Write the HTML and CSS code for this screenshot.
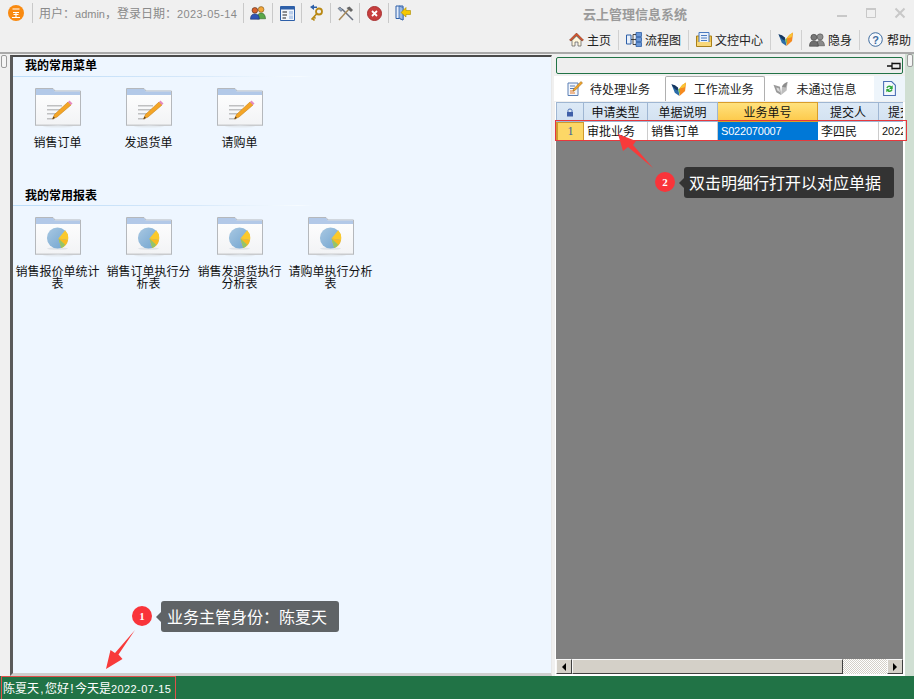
FILE: index.html
```html
<!DOCTYPE html>
<html lang="zh-CN">
<head>
<meta charset="utf-8">
<title>云上管理信息系统</title>
<link rel="stylesheet" href="styles.css">
</head>
<body>
<svg class="sprites" aria-hidden="true">
  <defs>
    <linearGradient id="pieBlue" x1="0" y1="0" x2="1" y2="1"><stop offset="0" stop-color="#a9c8e2"/><stop offset="1" stop-color="#6fa3cf"/></linearGradient>
    <linearGradient id="folderBody" x1="0" y1="0" x2="0" y2="1"><stop offset="0" stop-color="#ffffff"/><stop offset="1" stop-color="#f2f3f5"/></linearGradient>
    <symbol id="folder" viewBox="0 0 46 40">
      <path d="M.5 .5H18L20 3H45.5V37.5H.5Z" fill="url(#folderBody)" stroke="#b5b8bc"/>
      <path d="M1 1H18L20 3.5H45V7H1Z" fill="#b3c9e8"/>
      <path d="M1 36.500H45V38H1Z" fill="#c9cbce"/>
      <ellipse cx="23" cy="38.600" rx="15" ry="1" fill="#e4eaf0"/>
    </symbol>
    <symbol id="pencil" viewBox="0 0 26 24">
      <path d="M0 5H15V6.500H0ZM0 9H13V10.500H0ZM0 13H10V14.500H0ZM0 18H7V19.500H0Z" fill="#bfc0c1"/>
      <path d="M21 2L24 5L10 17L5.500 19L7.500 14.500Z" fill="#f4a526" stroke="#c77f10" stroke-width=".6"/>
      <path d="M21 2L22.500 .5L25.500 3.500L24 5Z" fill="#e58ac0"/>
      <path d="M5.500 19L6.500 16.500L8 18Z" fill="#4a3a2a"/>
    </symbol>
    <symbol id="pie" viewBox="0 0 24 24">
      <ellipse cx="12" cy="22.500" rx="11" ry="1.300" fill="#dfe3e8"/>
      <circle cx="12" cy="11.500" r="11" fill="url(#pieBlue)"/>
      <path d="M13 12L20 3.500A11 11 0 0 1 23 13.500Z" fill="#fbc92c"/>
      <path d="M13 12L23 13.500A11 11 0 0 1 16 22Z" fill="#f8bb22"/>
      <path d="M13 12L20 18.500A11 11 0 0 1 16 22Z" fill="#93c56a"/>
    </symbol>
    <symbol id="butterfly" viewBox="0 0 16 16">
      <path d="M0 2.500L7 6L8.500 15L3.500 11.500Z" fill="#2b6ca8"/>
      <path d="M0 2.500Q4 3 7 6L6.500 9Q2 7.500 0 2.500Z" fill="#16365f"/>
      <path d="M8.500 15L8.500 7Q11 2.500 15.500 .5L14.500 9.500Z" fill="#f58a1f"/>
      <path d="M8.500 7Q11 2.500 15.500 .5L14 5.500Z" fill="#f9c534"/>
      <path d="M7 8L9 7L9 13.500Z" fill="#7dbb47"/>
    </symbol>
    <symbol id="grayfly" viewBox="0 0 16 16">
      <path d="M0 4L7 6L8 15L3 12Z" fill="#9a9a9a"/>
      <path d="M8 15L9 6Q11 2 15 1L14 10Z" fill="#bdbdbd"/>
      <path d="M9 6Q11 2 15 1L13 7Z" fill="#8c8c8c"/>
      <path d="M3 7L6 8L7 12L4 10Z" fill="#d9d9d9"/>
    </symbol>
    <symbol id="people" viewBox="0 0 18 15">
      <circle cx="12.500" cy="3.500" r="3.200" fill="#f2a63b" stroke="#6b4a13" stroke-width=".6"/>
      <path d="M8 14Q8 7.500 12.500 7.500T17.500 14Z" fill="#5aa84a" stroke="#2a5a22" stroke-width=".6"/>
      <circle cx="5.500" cy="4.500" r="3.200" fill="#d9622b" stroke="#3a2010" stroke-width=".6"/>
      <path d="M.5 14.500Q.5 8.500 5.500 8.500T10.500 14.500Z" fill="#2f55b5" stroke="#162a60" stroke-width=".6"/>
    </symbol>
    <symbol id="grayppl" viewBox="0 0 18 15">
      <circle cx="12.500" cy="4" r="3.400" fill="#8f8f8f" stroke="#444" stroke-width=".6"/>
      <path d="M8 14Q8 8 12.500 8T17.500 14Z" fill="#8a8a8a" stroke="#444" stroke-width=".6"/>
      <circle cx="5.500" cy="4.500" r="3.400" fill="#777" stroke="#333" stroke-width=".6"/>
      <path d="M.5 14.500Q.5 8.500 5.500 8.500T10.500 14.500Z" fill="#6e6e6e" stroke="#333" stroke-width=".6"/>
    </symbol>
  </defs>
</svg>

<header class="top">
  <div class="top-row">
    <div class="logo">
      <svg viewBox="0 0 16 16" width="16" height="16"><circle cx="8" cy="8" r="8" fill="#f98a10"/><path d="M4.500 4H11.500M5 7.500H11M8 7.500V12M5.500 9.500H10.500M4 12.500H12" stroke="#fff" stroke-width="1.100" fill="none"/></svg>
    </div>
    <span class="sep"></span>
    <span class="user">用户&#xFF1A;<span class="lat">admin</span>&#xFF0C;登录日期&#xFF1A;<span class="num">2023-05-14</span></span>
    <span class="sep"></span>
    <span class="tool"><svg width="16" height="14"><use href="#people"/></svg></span><span class="sep"></span>
    <span class="tool"><svg viewBox="0 0 15 15" width="15" height="15"><path d="M.5 .5H14.500V14.500H.5Z" fill="#f2f6fc" stroke="#2d5fa8"/><path d="M1 1H14V3.500H1Z" fill="#2d5fa8"/><path d="M2.500 6H7M2.500 9H7M2.500 12H6" stroke="#222"/><path d="M9 5H13V8.500H9ZM9 9.500H13V13H9Z" fill="#b9cdea"/></svg></span><span class="sep"></span>
    <span class="tool"><svg viewBox="0 0 14 18" width="14" height="18"><path d="M1 3L5 .5V2.500H8V4H5V6Z" fill="#2d5fa8"/><circle cx="10" cy="7.500" r="3" fill="none" stroke="#b98914" stroke-width="1.800"/><path d="M8 9.500L2.500 15.500M3.500 14.500L5.500 16.500M5 13L6.500 14.500" stroke="#b98914" stroke-width="1.700" fill="none"/></svg></span><span class="sep"></span>
    <span class="tool"><svg viewBox="0 0 17 15" width="17" height="15"><path d="M5 3L16 14" stroke="#6b7280" stroke-width="1.500"/><path d="M12 3L2 14" stroke="#a88a5a" stroke-width="1.500"/><path d="M9.500 2L12.500 .5L16 4L14 6Z" fill="#666"/><path d="M1 2.500L3 1L5.500 3.500L4 5.500Z" fill="#8fa3b8" stroke="#445" stroke-width=".5"/></svg></span><span class="sep"></span>
    <span class="tool"><svg viewBox="0 0 15 15" width="15" height="15"><circle cx="7.500" cy="7.500" r="7" fill="#c73e3e" stroke="#a83232"/><path d="M5 5L10 10M10 5L5 10" stroke="#fff" stroke-width="1.800"/></svg></span><span class="sep"></span>
    <span class="tool"><svg viewBox="0 0 16 16" width="16" height="16"><path d="M1 1H8V15L4.500 13.500H1Z" fill="#e6eefb" stroke="#2d5fa8"/><path d="M4 1L8 2.500V15L4 13Z" fill="#9bb9e4" stroke="#2d5fa8" stroke-width=".7"/><path d="M15.500 5.500H11V2.500L6 7.500L11 12V9.500H15.500Z" fill="#f6c800" stroke="#a88a00" stroke-width=".6"/></svg></span>
    <span class="title">云上管理信息系统</span>
    <span class="wctl">
      <svg width="12" height="12"><path d="M1 9H11" stroke="#c8c8c8" stroke-width="2"/></svg>
      <svg width="12" height="12"><path d="M1.500 2H10.500V10.500H1.500Z" fill="none" stroke="#c8c8c8"/><path d="M1 2H11" stroke="#c8c8c8" stroke-width="2"/></svg>
      <svg width="12" height="12"><path d="M1.500 1.500L10.500 10.500M10.500 1.500L1.500 10.500" stroke="#c8c8c8" stroke-width="2"/></svg>
    </span>
  </div>
  <nav class="nav-row">
    <span class="nav"><svg viewBox="0 0 15 15" width="15" height="15"><path d="M7.500 1L.5 8L2 9L7.500 3.500L13 9L14.500 8Z" fill="#d8512a" stroke="#6b2a10" stroke-width=".5"/><path d="M3 8.500L7.500 4L12 8.500V14H9V10H6V14H3Z" fill="#fff6dc" stroke="#555" stroke-width=".7"/></svg>主页</span><span class="nsep"></span>
    <span class="nav"><svg viewBox="0 0 16 15" width="16" height="15"><path d="M.5 3H5V12H.5Z" fill="#e8f0fa" stroke="#2d5fa8"/><path d="M10 .5H15.500V4.500H10ZM10 5.500H15.500V9.500H10ZM10 10.500H15.500V14.500H10Z" fill="#6a97d6" stroke="#2d5fa8" stroke-width=".8"/><path d="M5 7.500H10M7 2.500H10M7 2.500V12.500H10" stroke="#222" fill="none" stroke-width=".8"/></svg>流程图</span><span class="nsep"></span>
    <span class="nav"><svg viewBox="0 0 16 15" width="16" height="15"><path d="M.5 4H15.500V14.500H.5Z" fill="#f0c24a" stroke="#a8801a"/><path d="M3 .5H13V12H3Z" fill="#e9f1fb" stroke="#4a7ac0"/><path d="M5 3.500H11M5 6H11M5 8.500H11" stroke="#4a7ac0"/><path d="M1 10H15V14H1Z" fill="#f8d778"/></svg>文控中心</span><span class="nsep"></span>
    <span class="nav"><svg width="16" height="15"><use href="#butterfly"/></svg></span><span class="nsep"></span>
    <span class="nav"><svg width="16" height="14"><use href="#grayppl"/></svg>隐身</span><span class="nsep"></span>
    <span class="nav last"><svg viewBox="0 0 15 15" width="15" height="15"><circle cx="7.500" cy="7.500" r="6.800" fill="#f5f8fc" stroke="#3f6c9f"/><text class="qmark" x="7.500" y="11.500" text-anchor="middle">?</text></svg>帮助</span>
  </nav>
</header>

<div class="main">
  <div class="gutter"><span class="handle"></span></div>
  <section class="panel">
    <h2 class="sec-title">我的常用菜单</h2>
    <div class="sec-line"></div>
    <div class="items first">
      <div class="item"><span class="ico"><svg class="fld" width="46" height="40"><use href="#folder"/></svg><svg class="pen" width="26" height="24"><use href="#pencil"/></svg></span><span class="lbl">销售订单</span></div>
      <div class="item"><span class="ico"><svg class="fld" width="46" height="40"><use href="#folder"/></svg><svg class="pen" width="26" height="24"><use href="#pencil"/></svg></span><span class="lbl">发退货单</span></div>
      <div class="item"><span class="ico"><svg class="fld" width="46" height="40"><use href="#folder"/></svg><svg class="pen" width="26" height="24"><use href="#pencil"/></svg></span><span class="lbl">请购单</span></div>
    </div>
    <h2 class="sec-title second">我的常用报表</h2>
    <div class="sec-line"></div>
    <div class="items">
      <div class="item"><span class="ico"><svg class="fld" width="46" height="40"><use href="#folder"/></svg><svg class="chart" width="23" height="23"><use href="#pie"/></svg></span><span class="lbl">销售报价单统计表</span></div>
      <div class="item"><span class="ico"><svg class="fld" width="46" height="40"><use href="#folder"/></svg><svg class="chart" width="23" height="23"><use href="#pie"/></svg></span><span class="lbl">销售订单执行分析表</span></div>
      <div class="item"><span class="ico"><svg class="fld" width="46" height="40"><use href="#folder"/></svg><svg class="chart" width="23" height="23"><use href="#pie"/></svg></span><span class="lbl">销售发退货执行分析表</span></div>
      <div class="item"><span class="ico"><svg class="fld" width="46" height="40"><use href="#folder"/></svg><svg class="chart" width="23" height="23"><use href="#pie"/></svg></span><span class="lbl">请购单执行分析表</span></div>
    </div>
  </section>

  <section class="right">
    <div class="dock"><svg width="14" height="8" viewBox="0 0 14 8"><path d="M0 4H5M5 .5V7.500M5 1.500H13V6.500H5" fill="none" stroke="#111" stroke-width="1.300"/></svg></div>
    <div class="tabs">
      <span class="tab"><svg viewBox="0 0 16 15" width="16" height="15"><path d="M1 2H11V14.500H1Z" fill="#f3f6fb" stroke="#5a7fb5"/><path d="M3 5H8M3 7.500H8" stroke="#5a7fb5"/><path d="M3 10H7M3 12H8" stroke="#e57a2a"/><path d="M14 .5L15.500 2L8 9.500L6 10L6.500 8Z" fill="#f4a526" stroke="#8a5a10" stroke-width=".5"/></svg>待处理业务</span>
      <span class="tab active"><svg width="16" height="15"><use href="#butterfly"/></svg>工作流业务</span>
      <span class="tab third"><svg width="16" height="15"><use href="#grayfly"/></svg>未通过信息</span>
      <span class="refresh"><svg viewBox="0 0 12 14" width="13" height="15"><path d="M.5 .5H8L11.500 4V13.500H.5Z" fill="#f4f8fe" stroke="#4a6fb5"/><path d="M3 6Q5 3 8 5L9 4V7.500H5.500L7 6Q5 5 4 7Z" fill="#2fa83a"/><path d="M9 8.500Q7 11.500 4 9.500L3 10.500V7.500H6.500L5 8.500Q7 9.500 8 7.500Z" fill="#2fa83a"/></svg></span>
    </div>
    <div class="grid">
      <div class="cols head">
        <span class="hc lock"><svg viewBox="0 0 8 9" width="8" height="9"><path d="M2 4V2.500Q2 1 4 1T6 2.500V4" fill="none" stroke="#4a6fb5"/><path d="M1 4H7V8.500H1Z" fill="#3f5fa8"/></svg></span>
        <span class="hc">申请类型</span>
        <span class="hc">单据说明</span>
        <span class="hc sel">业务单号</span>
        <span class="hc">提交人</span>
        <span class="hc clip">提交时间</span>
      </div>
      <div class="cols row">
        <span class="rh">1</span>
        <span class="c">审批业务</span>
        <span class="c">销售订单</span>
        <span class="c cur">S022070007</span>
        <span class="c">李四民</span>
        <span class="c date">2022-07-15</span>
      </div>
      <div class="empty"></div>
      <div class="hscroll">
        <span class="sbtn"><i class="arr l"></i></span>
        <span class="thumb"></span>
        <span class="track"></span>
        <span class="sbtn"><i class="arr r"></i></span>
      </div>
    </div>
  </section>
  <div class="strip"><span class="handle"></span></div>
</div>

<footer class="status"><span class="status-msg">陈夏天<span class="half">,</span>您好<span class="half">!</span>今天是<span class="num">2022-07-15</span></span></footer>

<div class="rowmark"></div>
<svg class="arrow a1" width="40" height="44" viewBox="0 0 40 44"><path d="M34 1L17.500 25.500L21.500 30L5 40L9.500 21L14 24Z" fill="#f83a3a"/></svg>
<svg class="arrow a2" width="42" height="42" viewBox="0 0 42 42"><path d="M3 4L21 11L18 15L38 38L13 17L8 21Z" fill="#f83a3a"/></svg>
<span class="badge b1">1</span>
<span class="tip t1">业务主管身份&#xFF1A;陈夏天</span>
<span class="badge b2">2</span>
<span class="tip t2">双击明细行打开以对应单据</span>
</body>
</html>
```

FILE: styles.css
```css
* { box-sizing: border-box; }
html, body { margin: 0; height: 100%; }
body {
  width: 914px; height: 699px; overflow: hidden; position: relative;
  display: flex; flex-direction: column;
  background: #f0f0f0; color: #111;
  font: 12px/1 "Noto Sans CJK SC", "Liberation Sans", sans-serif;
}
.sprites { position: absolute; width: 0; height: 0; }
.lat { font-family: "Liberation Sans", sans-serif; font-size: 11px; }
.num { font-family: "Liberation Sans", sans-serif; font-size: 11px; letter-spacing: .4px; }
.half { display: inline-block; width: 6px; font-family: "Liberation Sans", sans-serif; text-align: center; }

.top { height: 54px; flex: none; border-bottom: 2px solid #a9a9a9; background: #f0f0f0; display: flex; flex-direction: column; }
.top-row { height: 27px; display: flex; align-items: center; padding: 0 0 1px 8px; }
.logo { width: 16px; height: 16px; margin-right: 8px; display: flex; }
.sep { width: 1px; height: 20px; background: #c9c9c9; flex: none; }
.user { width: 210px; padding-left: 6px; color: #8a8a8a; white-space: nowrap; }
.tool { width: 28px; display: flex; justify-content: center; flex: none; }
.title { margin-left: 166px; width: 104px; color: #9a9a9a; font-size: 13px; font-weight: 700; white-space: nowrap; }
.wctl { margin-left: 149px; display: flex; gap: 17px; }

.nav-row { height: 25px; display: flex; justify-content: flex-end; align-items: center; padding-right: 3px; }
.nav { display: flex; align-items: center; gap: 3px; color: #222; white-space: nowrap; padding: 0 7px; }
.nav.last { padding: 0 0 0 8px; gap: 4px; }
.nsep { width: 1px; height: 20px; background: #d0d0d0; }
.qmark { font: 700 11px "Liberation Sans", sans-serif; fill: #3f6c9f; }

.main { flex: 1; min-height: 0; display: flex; }
.gutter { width: 10px; flex: none; padding: 1px 0 0 1px; }
.handle { display: block; width: 6px; height: 13px; border: 1px solid #9a9a9a; border-radius: 2px; background: #f4f4f4; }

.panel { width: 542px; flex: none; margin-top: 1px; background: #eef6ff; border-left: 3px solid #5a5a5a; border-top: 2px solid #4a4a4a; border-bottom: 3px solid #cfcfcf; border-right: 1px solid #e8e8e8; }
.sec-title { margin: 0; padding-left: 12px; height: 19px; font-size: 12px; font-weight: 700; color: #000; line-height: 16px; }
.sec-title.second { height: 17px; line-height: 13px; }
.sec-line { height: 1px; width: 300px; background: linear-gradient(to right, #bcdcf8, #d6e8fa 60%, #f6fbff 95%, #eef6ff); }
.items { display: flex; padding: 11px 0 0; margin-left: -1px; }
.items.first { height: 111px; }
.item { width: 91px; flex: none; display: flex; flex-direction: column; align-items: center; }
.ico { display: block; position: relative; width: 46px; height: 40px; }
.fld { display: block; }
.pen { position: absolute; left: 12px; top: 12px; }
.chart { position: absolute; left: 11px; top: 10px; }
.lbl { width: 84px; margin-top: 8px; text-align: center; line-height: 12px; color: #111; word-break: break-all; }

.right { width: 353px; flex: none; display: flex; flex-direction: column; padding-top: 3px; }
.dock { height: 17px; width: 347px; margin-left: 4px; border: 1px solid #217346; border-radius: 2px; background: #eeeeee; display: flex; align-items: center; justify-content: flex-end; padding-right: 1px; flex: none; }
.tabs { height: 25px; margin: 2px 0 1px 2px; background: #fff; display: flex; flex: none; align-items: stretch; padding-left: 11px; }
.tab { display: flex; align-items: center; gap: 7px; width: 100px; color: #222; padding-left: 2px; white-space: nowrap; }
.tab svg { flex: none; }
.tab.active { width: 101px; border: 1px solid #b0b0b0; border-bottom: 0; border-radius: 2px 2px 0 0; padding-left: 5px; }
.tab.third { width: 109px; padding-left: 8px; }
.refresh { width: 31px; background: #eef5fb; display: flex; align-items: center; justify-content: center; }

.grid { flex: 1; min-height: 0; margin-left: 3px; padding: 0 2px 2px 1px; background: #fff; display: flex; flex-direction: column; }
.cols { display: grid; grid-template-columns: 28px 64px 70px 100px 61px 24px; flex: none; }
.head { height: 20px; }
.hc { background: linear-gradient(#dce9f6, #d3e2f1); border: 1px solid #9fb6d2; border-left: 0; display: flex; align-items: center; justify-content: center; color: #111; overflow: hidden; white-space: nowrap; }
.hc.lock { border-left: 1px solid #9fb6d2; }
.hc.sel { background: linear-gradient(#ffe27e, #fdc94a); border-color: #d99d2a; }
.hc.clip { justify-content: flex-start; padding-left: 9px; border-right: 0; }
.row { height: 19px; background: #fff; }
.rh { background: #fcd766; border: 1px solid #cf9a2e; border-left-width: 2px; color: #2c5fa0; display: flex; align-items: center; justify-content: center; font: 12px "Liberation Serif", serif; }
.c { display: flex; align-items: center; padding-left: 3px; border-right: 1px solid #ccc; border-bottom: 1px solid #ccc; overflow: hidden; white-space: nowrap; }
.c.cur { background: #0078d7; color: #fff; font: 11px "Liberation Sans", sans-serif; letter-spacing: -.2px; border-color: #0078d7; }
.c.date { font: 11px "Liberation Sans", sans-serif; border-right: 0; }
.empty { flex: 1; min-height: 0; background: #808080; }
.hscroll { height: 15px; flex: none; display: flex; background: #808080; }
.sbtn, .thumb { background: #d4d0c8; border: 1px solid; border-color: #f8f8f8 #404040 #404040 #f8f8f8; }
.sbtn { width: 16px; flex: none; display: flex; align-items: center; justify-content: center; }
.thumb { width: 271px; flex: none; }
.track { flex: 1; background: repeating-conic-gradient(#fff 0 25%, #d4d0c8 0 50%) 0 0 / 2px 2px; }
.arr { width: 0; height: 0; border-top: 4px solid transparent; border-bottom: 4px solid transparent; }
.arr.l { border-right: 4px solid #000; }
.arr.r { border-left: 4px solid #000; }

.strip { flex: 1; background: #d0dfd3; padding: 0 0 0 2px; }

.status { height: 23px; flex: none; background: #217346; padding-left: 1px; display: flex; }
.status-msg { width: 175px; border: 1px solid #e0504a; border-bottom: 0; color: #fff; line-height: 22px; padding-left: 1px; white-space: nowrap; }

.rowmark { position: absolute; left: 555px; top: 120px; width: 352px; height: 21px; border: 1px solid #e8383d; }
.arrow { position: absolute; }
.a1 { left: 101px; top: 629px; }
.a2 { left: 615px; top: 130px; }
.badge { position: absolute; width: 20px; height: 20px; border-radius: 50%; background: #f9343a; color: #fff; text-align: center; font: 700 11px/20px "Liberation Serif", serif; }
.b1 { left: 132px; top: 606px; }
.b2 { left: 655px; top: 172px; }
.tip { position: absolute; height: 31px; line-height: 31px; color: #fff; font-size: 16px; padding-left: 6px; border-radius: 3px; white-space: nowrap; }
.tip::before { content: ""; position: absolute; left: -5px; top: 11px; border: 5px solid transparent; border-left: 0; border-right-color: inherit; }
.t1 { left: 161px; top: 601px; width: 178px; background: #5f6366; border-color: #5f6366; }
.t2 { left: 684px; top: 167px; width: 210px; background: #333333; border-color: #333333; padding-left: 5px; }
```
